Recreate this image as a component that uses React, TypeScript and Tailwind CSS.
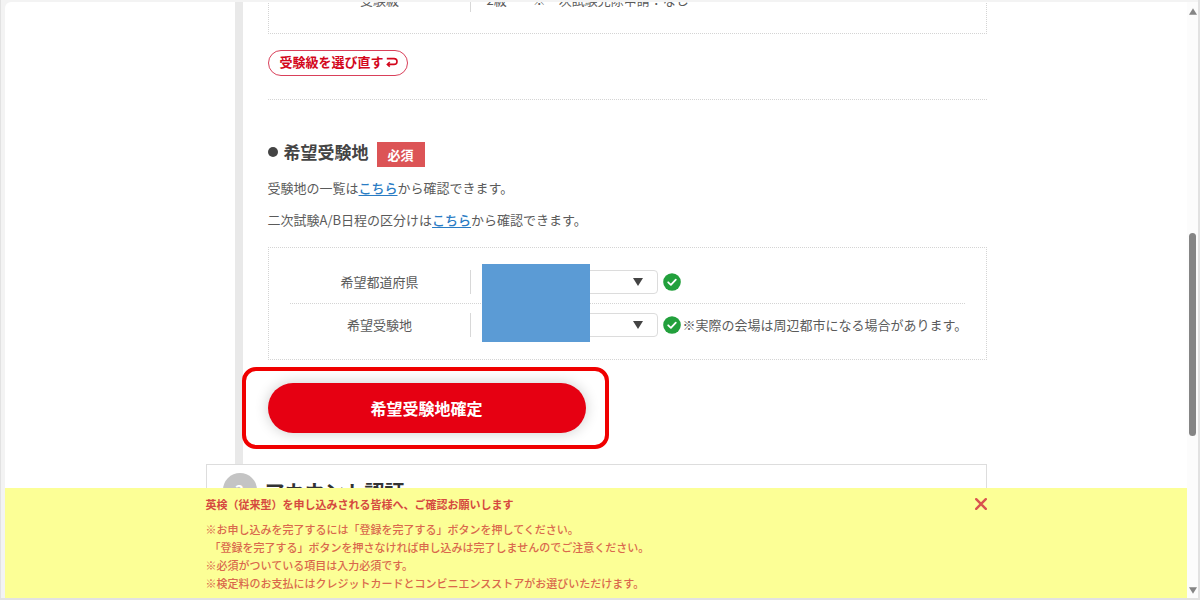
import type { ReactNode } from "react";

function ArrowIcon({ className, points }: { className: string; points: string }) {
  return (
    <svg viewBox="0 0 10 8" className={className} aria-hidden="true">
      <polygon points={points} fill="currentColor" />
    </svg>
  );
}

function CheckBadge() {
  return (
    <svg viewBox="0 0 18 18" className="size-[18px] shrink-0" aria-hidden="true">
      <circle cx="9" cy="9" r="8.8" fill="#22a03c" />
      <path d="M5.2 9.3 L7.9 11.8 L12.8 6.6" fill="none" stroke="#fff" strokeWidth="1.8" strokeLinecap="round" strokeLinejoin="round" />
    </svg>
  );
}

function Row({ id, label, children }: { id?: string; label: string; children: ReactNode }) {
  return (
    <div className="flex h-[42px] items-center">
      <div className="flex h-6 w-[181px] shrink-0 items-center justify-center border-r border-[#d8d8d8]">
        <label htmlFor={id}>{label}</label>
      </div>
      <div className="flex min-w-0 flex-1 items-center pl-4 whitespace-nowrap">{children}</div>
    </div>
  );
}

function Select({ id }: { id: string }) {
  return (
    <div className="relative mr-[5px]">
      <select id={id} className="block h-6 w-[171px] appearance-none rounded border border-[#dcdcdc] bg-white px-2">
        <option value=""></option>
      </select>
      <ArrowIcon points="0,0 10,0 5,8" className="pointer-events-none absolute top-2 right-[15px] h-2 w-[10px] text-[#444]" />
    </div>
  );
}

function InlineLink({ children }: { children: ReactNode }) {
  return (
    <a href="#" className="font-medium text-[#2a7cc4] underline underline-offset-2">
      {children}
    </a>
  );
}

function Notice() {
  return (
    <aside className="absolute inset-x-0 bottom-0 bg-[#fcff96] text-[11px] text-[#d9684c]">
      <div className="mx-auto w-full max-w-[781px] pt-2 pb-[6px]">
        <div className="flex items-center justify-between">
          <p className="leading-4 font-bold text-[#d5493f]">英検（従来型）を申し込みされる皆様へ、ご確認お願いします</p>
          <button type="button" aria-label="閉じる" className="text-[#d9534f]">
            <svg viewBox="0 0 12 12" className="size-3" aria-hidden="true">
              <path d="M1.2 1.2 L10.8 10.8 M10.8 1.2 L1.2 10.8" stroke="currentColor" strokeWidth="2.4" strokeLinecap="round" />
            </svg>
          </button>
        </div>
        <ul className="mt-2 font-medium leading-[18px]">
          <li>※お申し込みを完了するには「登録を完了する」ボタンを押してください。</li>
          <li className="pl-1">「登録を完了する」ボタンを押さなければ申し込みは完了しませんのでご注意ください。</li>
          <li>※必須がついている項目は入力必須です。</li>
          <li>※検定料のお支払にはクレジットカードとコンビニエンスストアがお選びいただけます。</li>
        </ul>
      </div>
    </aside>
  );
}

function Scrollbar() {
  return (
    <div className="flex w-[11px] flex-col items-center bg-[#fcfcfc] pt-[6px] pb-1 text-[#858585]">
      <ArrowIcon points="5,0 10,8 0,8" className="h-[7px] w-2" />
      <div className="grow-[218]" />
      <div className="w-[7px] grow-[203] rounded-full bg-[#858585]" />
      <div className="grow-[151]" />
      <ArrowIcon points="0,0 10,0 5,8" className="h-[7px] w-2" />
    </div>
  );
}

export default function App() {
  return (
    <div className="flex h-screen overflow-hidden border-r-2 border-b-2 border-l border-[#e2e2e2] bg-[#f3f3f3] pt-[2px] pl-1 font-['Noto_Sans_CJK_JP','Noto_Sans',sans-serif] text-[13px] text-[#5a5a5a]">
      <div className="relative flex-1 overflow-hidden rounded-tl-md bg-white">
        <main className="mx-auto w-full max-w-[781px]">
          <div className="flex">
            <div className="ml-[29px] w-2 shrink-0 bg-[#e9e9e9]" />
            <div className="min-w-0 flex-1 pl-[25px]">
              <section className="-mt-6 border border-dotted border-[#d4d4d4] px-[21px] pb-[12px]">
                <Row label="受験級">
                  <span>2級</span>
                  <span className="ml-[26px]">※一次試験免除申請：なし</span>
                </Row>
              </section>
              <button type="button" className="mt-4 flex h-[26px] items-center gap-[2px] rounded-full border border-[#d9405a] bg-white pr-[9px] pb-[2px] pl-[11px] text-[13px] leading-5 font-bold text-[#d3071c]">
                受験級を選び直す
                <svg viewBox="0 0 12 12" className="size-3" aria-hidden="true">
                  <path d="M0.8 2.6 H8 Q11 2.6 11 5.4 Q11 8.4 8 8.4 H2" fill="none" stroke="currentColor" strokeWidth="1.6" />
                  <path d="M3.8 6.2 L1.4 8.4 L3.8 10.6" fill="none" stroke="currentColor" strokeWidth="1.6" />
                </svg>
              </button>
              <hr className="mt-[23px] border-t border-dotted border-[#d4d4d4]" />

              <div className="mt-[42px] flex h-[25px] items-start">
                <span className="mt-[5px] size-[10px] rounded-full bg-[#444]" />
                <h2 className="ml-[6px] text-[17px] leading-5 font-bold text-[#444]">希望受験地</h2>
                <span className="ml-2 bg-[#dc5456] px-[11px] text-[13px] leading-[25px] font-bold text-white">必須</span>
              </div>
              <p className="mt-[11px] leading-5">
                受験地の一覧は<InlineLink>こちら</InlineLink>から確認できます。
              </p>
              <p className="mt-3 leading-5">
                二次試験A/B日程の区分けは<InlineLink>こちら</InlineLink>から確認できます。
              </p>

              <section className="relative mt-[17px] border border-dotted border-[#d4d4d4] px-[21px] py-[13px]">
                <Row id="prefecture" label="希望都道府県">
                  <Select id="prefecture" />
                  <CheckBadge />
                </Row>
                <hr className="border-t border-dotted border-[#d4d4d4]" />
                <Row id="area" label="希望受験地">
                  <Select id="area" />
                  <CheckBadge />
                  <span className="ml-[2px]">※実際の会場は周辺都市になる場合があります。</span>
                </Row>
                <div className="absolute top-4 left-[213px] h-[78px] w-[108px] bg-[#5b9bd5]" />
              </section>

              <div className="relative -ml-[26px] mt-[7px] mb-[15px] w-[367px] rounded-[14px] border-4 border-[#f00000] py-3 pr-[19px] pl-[22px]">
                <button type="button" className="block h-[50px] w-full rounded-full bg-[#e60012] text-[16px] font-bold text-white shadow-[0_0_14px_rgba(0,0,0,0.2)]">
                  希望受験地確定
                </button>
              </div>
            </div>
          </div>

          <section className="flex h-40 items-start gap-2 border border-[#ddd] px-4 pt-2">
            <span className="flex size-[34px] items-center justify-center rounded-full bg-[#c4c4c4] text-[15px] font-bold text-white">3</span>
            <h2 className="pt-[2px] text-[20px] leading-[34px] font-bold text-[#333]">アカウント認証</h2>
          </section>
        </main>
        <Notice />
      </div>
      <Scrollbar />
    </div>
  );
}
